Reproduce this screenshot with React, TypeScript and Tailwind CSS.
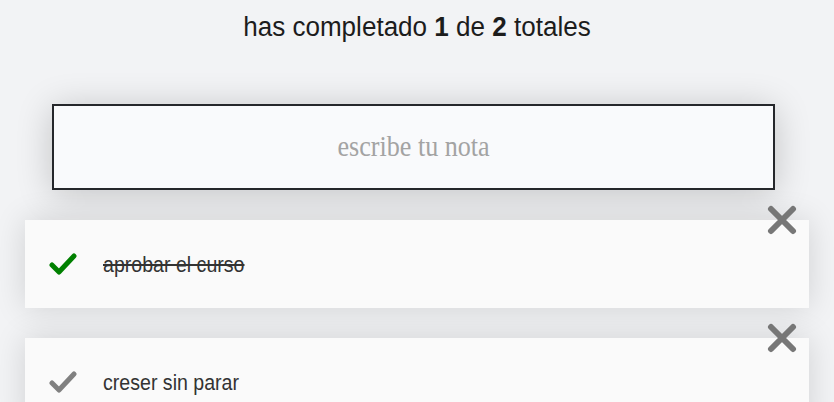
import React from "react";

type Todo = { text: string; done: boolean };

const todos: Todo[] = [
  { text: "aprobar el curso", done: true },
  { text: "creser sin parar", done: false },
];

function CheckIcon({ color }: { color: string }) {
  return (
    <svg width="28" height="24" viewBox="0 0 28 24" fill="none">
      <polyline
        points="3,13 10,20 25,4"
        stroke={color}
        strokeWidth="5"
        strokeLinecap="round"
        strokeLinejoin="round"
      />
    </svg>
  );
}

function CloseIcon() {
  return (
    <svg width="30" height="30" viewBox="0 0 30 30" fill="none">
      <path
        d="M4 4 L26 26 M26 4 L4 26"
        stroke="#777777"
        strokeWidth="6"
        strokeLinecap="round"
      />
    </svg>
  );
}

export default function App() {
  return (
    <main className="min-h-screen bg-[#f2f3f5] flex flex-col overflow-hidden">
      <h1 className="text-center text-[27px] leading-[32px] text-[#1c1c1c] pt-[11px] scale-x-[0.965] font-['Liberation_Sans',Arial,sans-serif]">
        has completado <b>1</b> de <b>2</b> totales
      </h1>

      <div className="ml-[52px] mr-[59px] mt-[61px] h-[86px] border-2 border-[#25272b] bg-[#f9fafc] flex items-center justify-center shadow-[0_4px_36px_rgba(0,0,0,0.2)]">
        <span className="text-[29px] text-[#a3a3a3] scale-x-[0.9] font-['Liberation_Serif','Times_New_Roman',serif]">
          escribe tu nota
        </span>
      </div>

      <ul className="mx-[25px] mt-[30px] flex flex-col gap-[30px]">
        {todos.map((t) => (
          <li
            key={t.text}
            className="relative h-[88px] bg-[#fafafa] flex items-center pl-[24px] shadow-[0_0_32px_rgba(0,0,0,0.14)]"
          >
            <CheckIcon color={t.done ? "#008000" : "#808080"} />
            <span
              className={
                "ml-[26px] inline-block origin-left scale-x-[0.89] text-[22px] text-[#333] font-['Liberation_Sans',Arial,sans-serif] " +
                (t.done ? "line-through" : "")
              }
            >
              {t.text}
            </span>
            <button className="absolute right-[12px] top-[-15px]">
              <CloseIcon />
            </button>
          </li>
        ))}
      </ul>
    </main>
  );
}
